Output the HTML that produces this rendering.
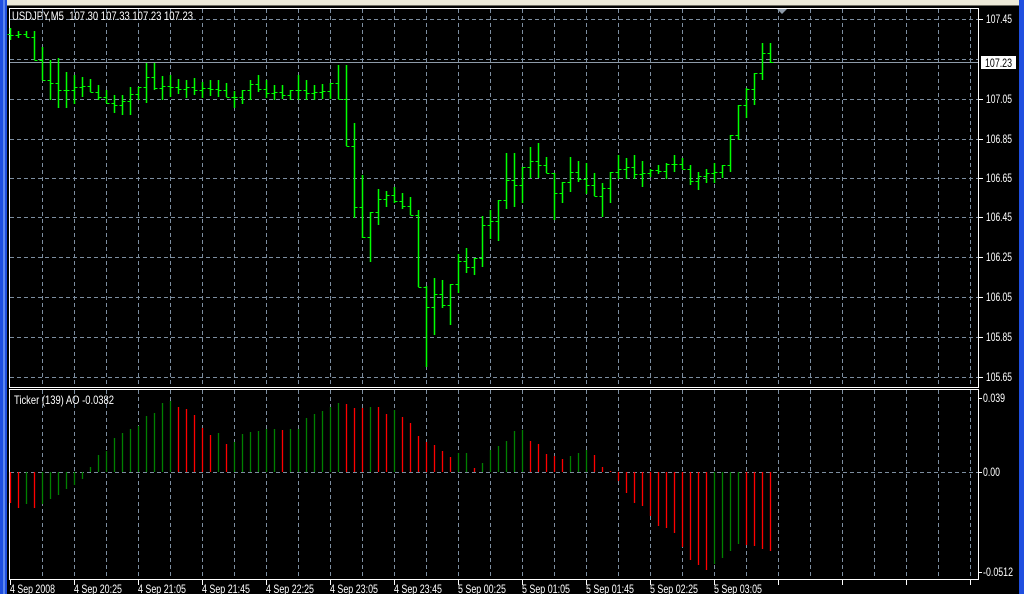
<!DOCTYPE html>
<html><head><meta charset="utf-8">
<style>
html,body{margin:0;padding:0;background:#000;width:1024px;height:594px;overflow:hidden}
svg{display:block}
text{font-family:"Liberation Sans",sans-serif;font-size:12px;fill:#fff;white-space:pre}
</style></head>
<body>
<svg id="s" width="1024" height="594" xmlns="http://www.w3.org/2000/svg">
<rect x="0" y="0" width="1024" height="594" fill="#000"/>
<rect x="0" y="0" width="1024" height="5" fill="#ece9d8"/>
<rect x="0" y="5" width="1024" height="1" fill="#716f64"/>
<rect x="0" y="0" width="7" height="594" fill="#1f4fe0"/>
<rect x="3" y="0" width="2" height="594" fill="#5b86f0"/>
<rect x="1019" y="0" width="5" height="594" fill="#1f4fe0"/>
<g id="grid" stroke="#7d8ea0" stroke-width="1" stroke-dasharray="4,3"></g>
<line x1="10" y1="62.5" x2="978" y2="62.5" stroke="#8d9aa8" stroke-width="1"/>
<rect x="9.5" y="8.5" width="969" height="379" fill="none" stroke="#fff"/>
<rect x="9.5" y="389.5" width="969" height="190" fill="none" stroke="#fff"/>
<g id="bars" stroke="#00ff00" stroke-width="1.5"></g>
<g id="ao" stroke-width="1.3"></g>
<polygon points="777,9 787,9 782,14" fill="#8d9aa8"/>
<text x="12" y="20" textLength="181" lengthAdjust="spacingAndGlyphs">USDJPY,M5  107.30 107.33 107.23 107.23</text>
<text x="14" y="404" textLength="100" lengthAdjust="spacingAndGlyphs">Ticker (139) AO -0.0382</text>
<g id="paxis" stroke="#fff"></g>
<text x="986" y="23" textLength="26" lengthAdjust="spacingAndGlyphs">107.45</text>
<text x="986" y="103" textLength="26" lengthAdjust="spacingAndGlyphs">107.05</text>
<text x="986" y="143" textLength="26" lengthAdjust="spacingAndGlyphs">106.85</text>
<text x="986" y="182" textLength="26" lengthAdjust="spacingAndGlyphs">106.65</text>
<text x="986" y="221" textLength="26" lengthAdjust="spacingAndGlyphs">106.45</text>
<text x="986" y="261" textLength="26" lengthAdjust="spacingAndGlyphs">106.25</text>
<text x="986" y="301" textLength="26" lengthAdjust="spacingAndGlyphs">106.05</text>
<text x="986" y="341" textLength="26" lengthAdjust="spacingAndGlyphs">105.85</text>
<text x="986" y="381" textLength="26" lengthAdjust="spacingAndGlyphs">105.65</text>
<rect x="981" y="56" width="35" height="13" fill="#fff"/>
<text x="985" y="67" style="fill:#000" textLength="27" lengthAdjust="spacingAndGlyphs">107.23</text>
<text x="983" y="402" textLength="22" lengthAdjust="spacingAndGlyphs">0.039</text>
<text x="983" y="476" textLength="17" lengthAdjust="spacingAndGlyphs">0.00</text>
<text x="983" y="576" textLength="30" lengthAdjust="spacingAndGlyphs">-0.0512</text>
<g id="taxis" stroke="#fff"></g>
<text x="10" y="593" textLength="45" lengthAdjust="spacingAndGlyphs">4 Sep 2008</text>
<text x="74" y="593" textLength="48" lengthAdjust="spacingAndGlyphs">4 Sep 20:25</text>
<text x="138" y="593" textLength="48" lengthAdjust="spacingAndGlyphs">4 Sep 21:05</text>
<text x="202" y="593" textLength="48" lengthAdjust="spacingAndGlyphs">4 Sep 21:45</text>
<text x="266" y="593" textLength="48" lengthAdjust="spacingAndGlyphs">4 Sep 22:25</text>
<text x="330" y="593" textLength="48" lengthAdjust="spacingAndGlyphs">4 Sep 23:05</text>
<text x="394" y="593" textLength="48" lengthAdjust="spacingAndGlyphs">4 Sep 23:45</text>
<text x="458" y="593" textLength="48" lengthAdjust="spacingAndGlyphs">5 Sep 00:25</text>
<text x="522" y="593" textLength="48" lengthAdjust="spacingAndGlyphs">5 Sep 01:05</text>
<text x="586" y="593" textLength="48" lengthAdjust="spacingAndGlyphs">5 Sep 01:45</text>
<text x="650" y="593" textLength="48" lengthAdjust="spacingAndGlyphs">5 Sep 02:25</text>
<text x="714" y="593" textLength="48" lengthAdjust="spacingAndGlyphs">5 Sep 03:05</text>
</svg>
<script>
var NS="http://www.w3.org/2000/svg";
function L(g,x1,y1,x2,y2,c,w){var l=document.createElementNS(NS,"line");l.setAttribute("x1",x1);l.setAttribute("y1",y1);l.setAttribute("x2",x2);l.setAttribute("y2",y2);if(c)l.setAttribute("stroke",c);if(w)l.setAttribute("stroke-width",w);document.getElementById(g).appendChild(l);}
for(var x=42;x<978;x+=32){L("grid",x+.5,9,x+.5,387);L("grid",x+.5,390,x+.5,579);}
[19,59,99,139,178,217,257,297,337,377].forEach(function(y){L("grid",10,y+.5,978,y+.5);});
L("grid",10,472.5,978,472.5);
[19,99,139,178,217,257,297,337,377].forEach(function(y){L("paxis",979,y+.5,983,y+.5);});
[398,472,572].forEach(function(y){L("paxis",979,y+.5,982,y+.5);});
for(var x=10;x<978;x+=64){L("taxis",x+.5,580,x+.5,585);}
var hl=[[28,40],[31,38],[31,37],[31,60],[47,80],[60,100],[58,108],[72,108],[75,104],[77,97],[79,92],[85,100],[90,103],[95,113],[95,115],[87,115],[87,100],[63,103],[63,90],[76,100],[75,97],[79,94],[80,98],[78,95],[82,98],[80,96],[80,97],[83,97],[91,108],[90,104],[80,100],[75,92],[80,98],[85,100],[85,99],[90,100],[75,100],[80,100],[85,100],[84,99],[83,99],[65,99],[65,146],[123,218],[175,238],[212,262],[189,225],[191,207],[187,203],[193,209],[197,215],[210,287],[286,367],[278,335],[280,308],[284,325],[254,293],[248,273],[258,275],[216,267],[210,239],[200,241],[153,209],[153,207],[167,203],[147,178],[143,178],[157,173],[173,220],[182,203],[157,192],[161,182],[163,194],[173,196],[183,217],[172,203],[155,179],[158,179],[155,179],[161,187],[169,177],[165,174],[163,179],[155,172],[158,169],[165,185],[172,190],[169,183],[163,183],[165,178],[135,172],[105,140],[88,118],[73,105],[43,80],[43,63]];
var prevC=null;
for(var i=0;i<hl.length;i++){
 var x=10+8*i+.5,h=hl[i][0],l=hl[i][1];
 var o=prevC==null?(h+l)/2:Math.min(l,Math.max(h,prevC));
 var nx=hl[i+1]?(hl[i+1][0]+hl[i+1][1])/2:62;
 var c=Math.min(l,Math.max(h,nx));
 if(i==hl.length-1)c=62;
 L("bars",x,h,x,l);L("bars",x-3,Math.round(o)+.5,x,Math.round(o)+.5,null,1);L("bars",x,Math.round(c)+.5,x+3,Math.round(c)+.5,null,1);
 prevC=c;
}
var ao=[[503,0],[508,0],[504,1],[508,0],[504,1],[499,1],[495,1],[489,1],[485,1],[479,1],[467,1],[455,1],[451,1],[438,1],[433,1],[429,1],[426,1],[416,1],[413,1],[403,1],[401,1],[407,0],[409,0],[415,0],[428,0],[435,0],[433,1],[444,0],[442,1],[434,1],[432,1],[431,1],[429,1],[429,1],[430,0],[429,1],[429,1],[418,1],[414,1],[411,1],[407,1],[403,1],
[404,0],[408,0],[408,0],[407,1],[407,0],[414,0],[410,1],[417,0],[423,0],[436,0],[442,0],[445,0],[451,0],[457,0],[453,1],[453,1],[468,0],[463,1],[450,1],[446,1],[441,1],[431,1],[430,1],[441,0],[444,0],[454,0],[456,0],[459,0],[456,1],[453,1],[450,1],[455,0],[467,0],[471,0],[481,0],[493,0],[503,0],[506,0],[516,0],[526,0],[528,0],[533,0],[547,0],[560,0],[565,0],[570,0],[564,1],[558,1],[551,1],[544,1],[545,0],[546,0],[549,0],[551,0]];
for(var j=0;j<ao.length;j++){var x=10+8*j+.5;L("ao",x,472,x,ao[j][0],ao[j][1]?"#008000":"#ff0000");}
</script>
</body></html>
